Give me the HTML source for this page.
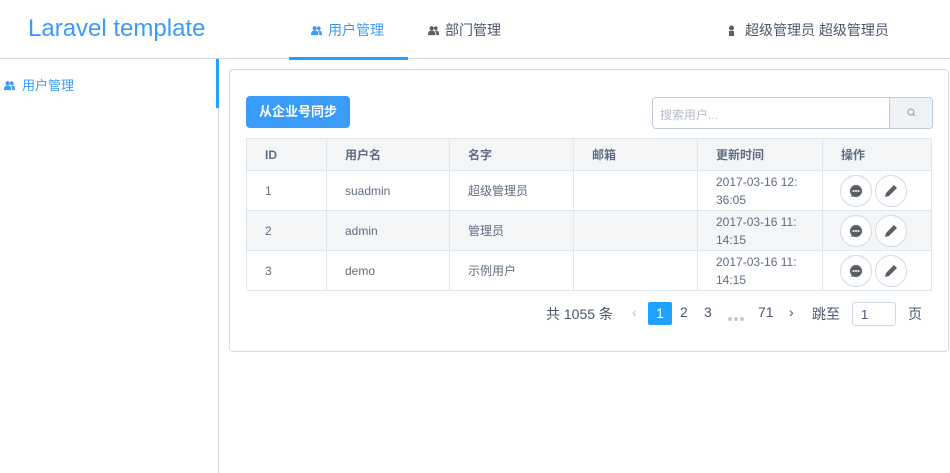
<!DOCTYPE html>
<html><head><meta charset="utf-8"><style>
*{box-sizing:border-box;margin:0;padding:0}
body{width:950px;height:473px;background:#fff;font-family:"Liberation Sans","Noto Sans CJK SC",sans-serif;position:relative;overflow:hidden;color:#48576a;font-size:13px}
.abs{position:absolute}
.hdr{left:0;top:0;width:950px;height:59px;border-bottom:1px solid #d1dbe5}
.logo{left:28px;top:15px;font-size:24px;color:#3a9cf8}
.nav{top:20px;font-size:14px;color:#48576a}
.nav svg{vertical-align:-1px;margin-right:6px}
.tabline{left:289px;top:57px;width:119px;height:3px;background:#20a0ff}
.side{left:0;top:59px;width:219px;height:414px;border-right:1px solid #d1dbe5}
.sbar{left:216px;top:59px;width:3px;height:49px;background:#20a0ff}
.card{left:229px;top:69px;width:720px;height:283px;border:1px solid #d1dbe5;border-radius:4px}
.btn{left:246px;top:96px;width:104px;height:32px;background:#3a9cf8;border-radius:4px;color:#fff;font-size:13px;font-weight:bold;text-align:center;line-height:32px}
.inp{left:652px;top:97px;width:281px;height:32px;border:1px solid #bfcbd9;border-radius:4px;overflow:hidden}
.inp span{position:absolute;left:7px;top:8px;color:#b4bccc;font-size:12px}
.inp i{position:absolute;right:0;top:0;width:43px;height:30px;background:#eef1f6;border-left:1px solid #bfcbd9}
table{position:absolute;left:246px;top:138px;width:686px;border-collapse:collapse;font-size:12px}
td,th{border:1px solid #dfe6ec;padding:0 18px;text-align:left;color:#5e6d82}
td{height:40px;padding-top:0;padding-bottom:0}
th{height:32px;font-weight:bold;background:#f4f5f7;color:#5e6d82}
tr.g td{background:#f4f5f7}
.cb{display:inline-block;width:32px;height:32px;border:1px solid #d1dbe5;border-radius:50%;vertical-align:middle;margin-right:3px;position:relative;background:#fff}
.cb svg{position:absolute;left:0;top:0}
.pg{top:304px;font-size:14px;color:#48576a}
td.t{line-height:18px;font-size:12px}
</style></head><body>
<div class="abs hdr"></div>
<div class="abs logo">Laravel template</div>
<svg width="0" height="0" style="position:absolute"><defs><symbol id="u" viewBox="0 0 12 12"><circle cx="4" cy="3.5" r="2.3"/><path d="M0 11c0-4 1.5-5 4-5s4 1 4 5z"/><circle cx="8.5" cy="3.5" r="2"/><path d="M8.5 6c2.5 0 3.5 1 3.5 5H9c0-2-.3-3.5-1.5-4.5z"/></symbol></defs></svg>
<div class="abs nav" style="left:311px;color:#3a9cf8"><svg width="11" height="11" fill="#3a9cf8"><use href="#u"/></svg>用户管理</div>
<div class="abs nav" style="left:428px"><svg width="11" height="11" fill="#5a5e66"><use href="#u"/></svg>部门管理</div>
<div class="abs nav" style="left:728px"><svg width="7" height="11" fill="#5a5e66" style="margin-right:10px"><circle cx="3.5" cy="3" r="2.5"/><path d="M1 11h5V6H1z"/></svg>超级管理员 超级管理员</div>
<div class="abs tabline"></div>
<div class="abs side"></div>
<div class="abs sbar"></div>
<div class="abs" style="left:4px;top:75px;font-size:13px;color:#3a9cf8"><svg width="11" height="11" fill="#3a9cf8" style="vertical-align:-1px;margin-right:7px"><use href="#u"/></svg>用户管理</div>
<div class="abs card"></div>
<div class="abs btn">从企业号同步</div>
<div class="abs inp"><span>搜索用户...</span><i><svg width="43" height="30"><circle cx="21" cy="14" r="3" fill="none" stroke="#99a" stroke-width="1"/><line x1="23" y1="16" x2="25" y2="18" stroke="#99a"/></svg></i></div>
<table>
<tr><th style="width:80px">ID</th><th style="width:123px">用户名</th><th style="width:124px">名字</th><th style="width:124px">邮箱</th><th style="width:125px">更新时间</th><th>操作</th></tr>
<tr><td>1</td><td>suadmin</td><td>超级管理员</td><td></td><td class="t">2017-03-16 12:<br>36:05</td><td style="padding-left:17px"><span class="cb"><svg width="30" height="30"><circle cx="15" cy="15" r="6" fill="#5a5e66"/><path d="M11 19l-1 2 4-1z" fill="#5a5e66"/><circle cx="12.5" cy="15" r="1" fill="#fff"/><circle cx="15" cy="15" r="1" fill="#fff"/><circle cx="17.5" cy="15" r="1" fill="#fff"/></svg></span><span class="cb"><svg width="30" height="30"><path d="M9 21l1-4 8-8 3 3-8 8z" fill="#5a5e66"/></svg></span></td></tr>
<tr class="g"><td>2</td><td>admin</td><td>管理员</td><td></td><td class="t">2017-03-16 11:<br>14:15</td><td style="padding-left:17px"><span class="cb"><svg width="30" height="30"><circle cx="15" cy="15" r="6" fill="#5a5e66"/><path d="M11 19l-1 2 4-1z" fill="#5a5e66"/><circle cx="12.5" cy="15" r="1" fill="#fff"/><circle cx="15" cy="15" r="1" fill="#fff"/><circle cx="17.5" cy="15" r="1" fill="#fff"/></svg></span><span class="cb"><svg width="30" height="30"><path d="M9 21l1-4 8-8 3 3-8 8z" fill="#5a5e66"/></svg></span></td></tr>
<tr><td>3</td><td>demo</td><td>示例用户</td><td></td><td class="t">2017-03-16 11:<br>14:15</td><td style="padding-left:17px"><span class="cb"><svg width="30" height="30"><circle cx="15" cy="15" r="6" fill="#5a5e66"/><path d="M11 19l-1 2 4-1z" fill="#5a5e66"/><circle cx="12.5" cy="15" r="1" fill="#fff"/><circle cx="15" cy="15" r="1" fill="#fff"/><circle cx="17.5" cy="15" r="1" fill="#fff"/></svg></span><span class="cb"><svg width="30" height="30"><path d="M9 21l1-4 8-8 3 3-8 8z" fill="#5a5e66"/></svg></span></td></tr>
</table>
<div class="abs pg" style="left:546px">共 1055 条</div>
<div class="abs pg" style="left:632px;color:#bbb">‹</div>
<div class="abs" style="left:648px;top:302px;width:24px;height:23px;background:#20a0ff;border-radius:2px;color:#fff;text-align:center;line-height:23px;font-size:14px">1</div>
<div class="abs pg" style="left:680px">2</div>
<div class="abs pg" style="left:704px">3</div>
<div class="abs" style="left:727px;top:310px"><svg width="18" height="6" fill="#bfcbd9"><circle cx="3" cy="3" r="2"/><circle cx="9" cy="3" r="2"/><circle cx="15" cy="3" r="2"/></svg></div>
<div class="abs pg" style="left:758px">71</div>
<div class="abs pg" style="left:789px">›</div>
<div class="abs pg" style="left:812px">跳至</div>
<div class="abs" style="left:852px;top:302px;width:44px;height:24px;border:1px solid #d1dbe5;border-radius:3px;font-size:13px;padding:4px 8px">1</div>
<div class="abs pg" style="left:908px">页</div>
</body></html>
